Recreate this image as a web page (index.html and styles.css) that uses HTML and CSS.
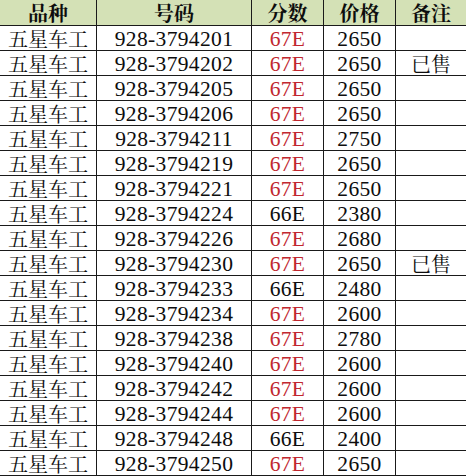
FILE: index.html
```html
<!DOCTYPE html>
<html lang="zh">
<head>
<meta charset="utf-8">
<title>五星车工</title>
<link rel="stylesheet" href="styles.css">
</head>
<body>
<div class="sheet">
  <div class="cell head">品种</div><div class="cell head">号码</div><div class="cell head">分数</div><div class="cell head">价格</div><div class="cell head last">备注</div>
  <div class="cell cn">五星车工</div><div class="cell num">928-3794201</div><div class="cell num red">67E</div><div class="cell num">2650</div><div class="cell cn last"></div>
  <div class="cell cn">五星车工</div><div class="cell num">928-3794202</div><div class="cell num red">67E</div><div class="cell num">2650</div><div class="cell cn last">已售</div>
  <div class="cell cn">五星车工</div><div class="cell num">928-3794205</div><div class="cell num red">67E</div><div class="cell num">2650</div><div class="cell cn last"></div>
  <div class="cell cn">五星车工</div><div class="cell num">928-3794206</div><div class="cell num red">67E</div><div class="cell num">2650</div><div class="cell cn last"></div>
  <div class="cell cn">五星车工</div><div class="cell num">928-3794211</div><div class="cell num red">67E</div><div class="cell num">2750</div><div class="cell cn last"></div>
  <div class="cell cn">五星车工</div><div class="cell num">928-3794219</div><div class="cell num red">67E</div><div class="cell num">2650</div><div class="cell cn last"></div>
  <div class="cell cn">五星车工</div><div class="cell num">928-3794221</div><div class="cell num red">67E</div><div class="cell num">2650</div><div class="cell cn last"></div>
  <div class="cell cn">五星车工</div><div class="cell num">928-3794224</div><div class="cell num">66E</div><div class="cell num">2380</div><div class="cell cn last"></div>
  <div class="cell cn">五星车工</div><div class="cell num">928-3794226</div><div class="cell num red">67E</div><div class="cell num">2680</div><div class="cell cn last"></div>
  <div class="cell cn">五星车工</div><div class="cell num">928-3794230</div><div class="cell num red">67E</div><div class="cell num">2650</div><div class="cell cn last">已售</div>
  <div class="cell cn">五星车工</div><div class="cell num">928-3794233</div><div class="cell num">66E</div><div class="cell num">2480</div><div class="cell cn last"></div>
  <div class="cell cn">五星车工</div><div class="cell num">928-3794234</div><div class="cell num red">67E</div><div class="cell num">2600</div><div class="cell cn last"></div>
  <div class="cell cn">五星车工</div><div class="cell num">928-3794238</div><div class="cell num red">67E</div><div class="cell num">2780</div><div class="cell cn last"></div>
  <div class="cell cn">五星车工</div><div class="cell num">928-3794240</div><div class="cell num red">67E</div><div class="cell num">2600</div><div class="cell cn last"></div>
  <div class="cell cn">五星车工</div><div class="cell num">928-3794242</div><div class="cell num red">67E</div><div class="cell num">2600</div><div class="cell cn last"></div>
  <div class="cell cn">五星车工</div><div class="cell num">928-3794244</div><div class="cell num red">67E</div><div class="cell num">2600</div><div class="cell cn last"></div>
  <div class="cell cn">五星车工</div><div class="cell num">928-3794248</div><div class="cell num">66E</div><div class="cell num">2400</div><div class="cell cn last"></div>
  <div class="cell cn">五星车工</div><div class="cell num">928-3794250</div><div class="cell num red">67E</div><div class="cell num">2650</div><div class="cell cn last"></div>
</div>
</body>
</html>
```
FILE: styles.css
```css
html, body {
  margin: 0;
  padding: 0;
  background: #ffffff;
}
.sheet {
  display: grid;
  grid-template-columns: 97px 155px 72px 72px 70px;
  grid-auto-rows: 25px;
  grid-template-rows: 26px;
  width: 466px;
}
.cell {
  box-sizing: border-box;
  border-right: 1px solid #1a1a1a;
  border-bottom: 1px solid #1a1a1a;
  display: flex;
  align-items: center;
  justify-content: center;
  padding-top: 2px;
  line-height: 20px;
  color: #0d0d0d;
  white-space: nowrap;
}
.cell.last {
  border-right: none;
}
.head {
  background: #d4e1b6;
  font-family: "Noto Serif CJK SC", "Noto Sans CJK SC", sans-serif;
  font-weight: 700;
  font-size: 20px;
  padding-top: 0;
}
.cn {
  font-family: "Noto Serif CJK SC", "Noto Sans CJK SC", sans-serif;
  font-size: 20px;
}
.num {
  font-family: "Liberation Serif", "Times New Roman", serif;
  font-size: 21.5px;
  letter-spacing: 0.35px;
}
.num.red {
  color: #c1272f;
}
```
